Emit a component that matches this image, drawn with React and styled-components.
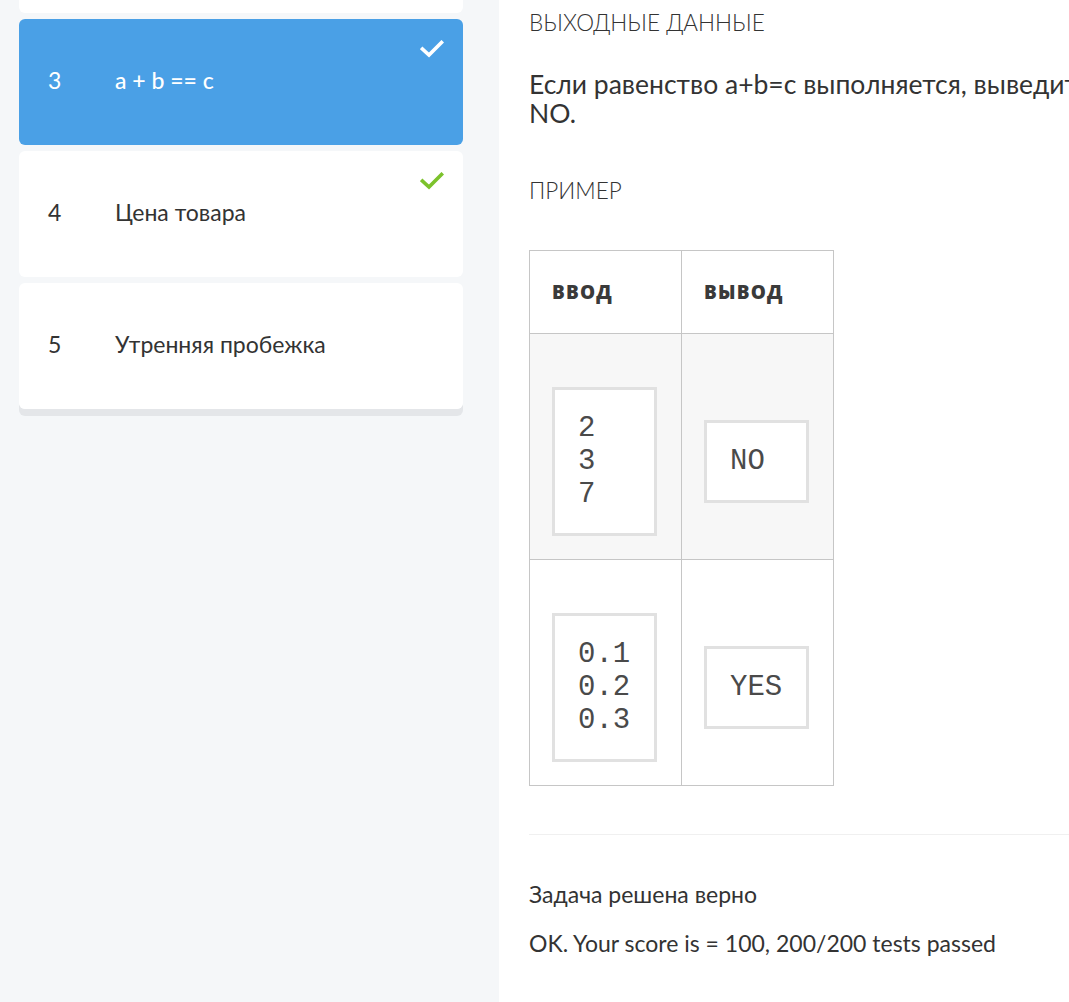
import React from "react";
import styled, { createGlobalStyle } from "styled-components";

const Global = createGlobalStyle`
  html, body { margin: 0; padding: 0; }
  body {
    font-family: Lato, "Noto Sans", sans-serif;
    color: #333;
    background: #fff;
    overflow: hidden;
  }
`;

const Page = styled.div`
  display: flex;
  width: 1069px;
  height: 1002px;
  overflow: hidden;
`;

const Sidebar = styled.aside`
  flex: 0 0 499px;
  background: #f5f7f9;
  box-sizing: border-box;
  padding: 0 36px 0 19px;
`;

const TaskList = styled.div`
  display: flex;
  flex-direction: column;
  gap: 6px;
  margin-top: -245px;
  border-radius: 6px;
  box-shadow: 0 7px 0 #e4e6e9;
`;

const TaskCard = styled.div`
  position: relative;
  height: 126px;
  border-radius: 6px;
  background: ${(p) => (p.$active ? "#4aa0e6" : "#fff")};
  color: ${(p) => (p.$active ? "#fff" : "#333")};
  display: flex;
  align-items: flex-start;
  padding: 48px 0 0 29px;
  box-sizing: border-box;
  font-size: 23px;
  line-height: 26px;
`;

const TaskNum = styled.span`
  width: 67px;
  flex: none;
`;

const TaskTitle = styled.span`
  font-weight: ${(p) => (p.$active ? 500 : 400)};
`;

const Check = styled.svg`
  position: absolute;
  top: 21px;
  right: 19px;
  width: 24px;
  height: 18px;
`;

const Main = styled.main`
  flex: 0 0 auto;
  width: 865px;
  box-sizing: border-box;
  padding: 10px 0 0 30px;
`;

const SectionTitle = styled.div`
  font-size: 22.5px;
  font-weight: 300;
  text-transform: uppercase;
  color: #333;
  line-height: 26px;
`;

const Paragraph = styled.p`
  font-size: 26.5px;
  line-height: 29px;
  margin: 34px 0 50px;
  color: #333;
`;

const ExampleTable = styled.table`
  border-collapse: collapse;
  margin-top: 46px;
  width: 305px;
  table-layout: fixed;
`;

const Th = styled.th`
  border: 1px solid #c6c6c6;
  height: 83px;
  padding: 0 22px;
  text-align: left;
  font-family: "Open Sans", Lato, sans-serif;
  font-weight: 800;
  font-size: 19px;
  letter-spacing: 1.2px;
  text-transform: uppercase;
  color: #3a3a3a;
  box-sizing: border-box;
`;

const Td = styled.td`
  border: 1px solid #c6c6c6;
  padding: 53px 22px 23px;
  vertical-align: middle;
  background: ${(p) => (p.$shade ? "#f7f7f7" : "#fff")};
`;

const Pre = styled.pre`
  margin: 0;
  width: 105px;
  box-sizing: border-box;
  border: 3px solid #e1e1e1;
  background: #fff;
  padding: 22px 20px 22px 23px;
  font-family: "Liberation Mono", "Courier New", monospace;
  font-size: 29px;
  line-height: 33px;
  color: #4a4a4a;
`;

const Divider = styled.hr`
  border: none;
  border-top: 1px solid #f0f0f0;
  margin: 48px 0 0;
  width: 100%;
`;

const Result = styled.div`
  margin-top: 45px;
  font-size: 23px;
  line-height: 28px;
  display: flex;
  flex-direction: column;
  gap: 21px;
`;

const CheckIcon = ({ color }) => (
  <Check viewBox="0 0 24 18">
    <path d="M2.5 9 L9 15 L21.5 2.5" fill="none" stroke={color} strokeWidth="3.6" strokeLinecap="square" strokeLinejoin="miter" />
  </Check>
);

const tasks = [
  { n: 1, title: "Сумма чисел" },
  { n: 2, title: "Разность" },
  { n: 3, title: "a + b == c", active: true, done: true },
  { n: 4, title: "Цена товара", done: true },
  { n: 5, title: "Утренняя пробежка" },
];

const rows = [
  { input: "2\n3\n7", output: "NO", shade: true },
  { input: "0.1\n0.2\n0.3", output: "YES" },
];

export default function App() {
  return (
    <>
      <Global />
      <Page>
        <Sidebar>
          <TaskList>
            {tasks.map((t) => (
              <TaskCard key={t.n} $active={t.active}>
                <TaskNum>{t.n}</TaskNum>
                <TaskTitle $active={t.active}>{t.title}</TaskTitle>
                {t.done && <CheckIcon color={t.active ? "#fff" : "#7cc22c"} />}
              </TaskCard>
            ))}
          </TaskList>
        </Sidebar>
        <Main>
          <SectionTitle>Выходные данные</SectionTitle>
          <Paragraph>
            Если равенство a+b=c выполняется, выведите YES, иначе выведите NO.
          </Paragraph>
          <SectionTitle>Пример</SectionTitle>
          <ExampleTable>
            <thead>
              <tr>
                <Th>Ввод</Th>
                <Th>Вывод</Th>
              </tr>
            </thead>
            <tbody>
              {rows.map((r, i) => (
                <tr key={i}>
                  <Td $shade={r.shade}>
                    <Pre>{r.input}</Pre>
                  </Td>
                  <Td $shade={r.shade}>
                    <Pre>{r.output}</Pre>
                  </Td>
                </tr>
              ))}
            </tbody>
          </ExampleTable>
          <Divider />
          <Result>
            <span>Задача решена верно</span>
            <span>OK. Your score is = 100, 200/200 tests passed</span>
          </Result>
        </Main>
      </Page>
    </>
  );
}
